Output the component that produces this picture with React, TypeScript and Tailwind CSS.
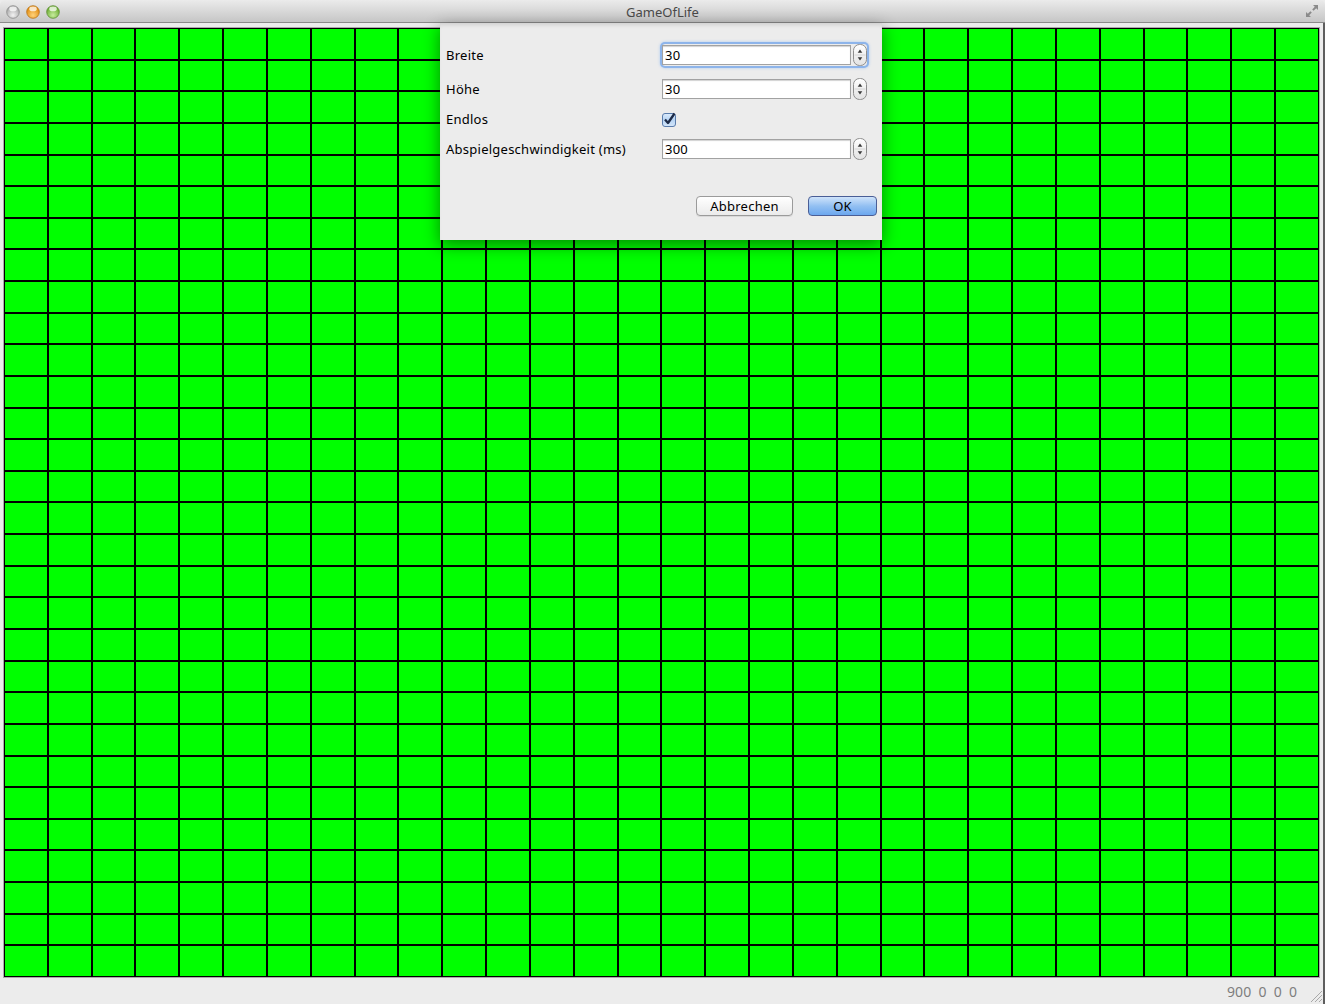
import React from "react";

function Light({ c1, c2, border }: { c1: string; c2: string; border: string }) {
  const id = "g" + c1.replace("#", "");
  return (
    <svg width="14" height="14" viewBox="0 0 14 14">
      <defs>
        <radialGradient id={id} cx="0.5" cy="0.75" r="0.65">
          <stop offset="0" stopColor={c1} />
          <stop offset="1" stopColor={c2} />
        </radialGradient>
      </defs>
      <circle cx="7" cy="7" r="6.3" fill={`url(#${id})`} stroke={border} strokeWidth="0.8" />
      <ellipse cx="7" cy="3.9" rx="3.8" ry="2.3" fill="#ffffff" opacity="0.75" />
    </svg>
  );
}

function Spinner() {
  return (
    <svg width="14" height="22" viewBox="0 0 14 22">
      <defs>
        <linearGradient id="spg" x1="0" y1="0" x2="0" y2="1">
          <stop offset="0" stopColor="#ffffff" />
          <stop offset="1" stopColor="#e2e2e2" />
        </linearGradient>
      </defs>
      <rect x="0.5" y="0.5" width="13" height="21" rx="6" fill="url(#spg)" stroke="#8e8e8e" />
      <line x1="1.5" y1="11" x2="12.5" y2="11" stroke="#d4d4d4" />
      <path d="M7 5.5 L9.3 8.8 H4.7 Z" fill="#3a3a3a" />
      <path d="M7 16.5 L9.3 13.2 H4.7 Z" fill="#3a3a3a" />
    </svg>
  );
}

function Field({ value, focused }: { value: string; focused?: boolean }) {
  return (
    <div
      className={
        focused
          ? "flex items-center gap-[2px] rounded-[3px] shadow-[0_0_0_2px_#8db4ea,0_0_3px_2px_#a9c8f0]"
          : "flex items-center gap-[2px]"
      }
    >
      <div className="w-[189px] h-[20px] bg-white border border-[#a2a2a2] shadow-[inset_0_1px_1px_rgba(0,0,0,0.18)] flex items-center pl-[2px] text-[13px] tracking-[0.2px] text-black leading-none">
        {value}
      </div>
      <Spinner />
    </div>
  );
}

function CheckBox() {
  return (
    <svg width="15" height="15" viewBox="0 0 15 15">
      <defs>
        <linearGradient id="cbg" x1="0" y1="0" x2="0" y2="1">
          <stop offset="0" stopColor="#dcebfb" />
          <stop offset="0.5" stopColor="#b7d4f4" />
          <stop offset="1" stopColor="#d4e6fa" />
        </linearGradient>
      </defs>
      <rect x="0.5" y="1.5" width="13" height="13" rx="2.5" fill="url(#cbg)" stroke="#5a7cab" />
      <path d="M3 7.5 L6 11 L12.5 1.5" fill="none" stroke="#1d2b47" strokeWidth="2.3" strokeLinejoin="round" />
    </svg>
  );
}

export default function App() {
  const cells = Array.from({ length: 900 });
  return (
    <div className="relative w-[1325px] h-[1004px] overflow-hidden bg-[#ececec] font-['Noto_Sans',sans-serif]">
      {/* title bar */}
      <div className="h-[23px] grid grid-cols-[1fr_auto_1fr] items-center bg-linear-to-b from-[#ebebeb] to-[#c6c6c6] border-b border-[#8a8a8a] rounded-t-[5px]">
        <div className="flex items-center gap-[6px] pl-[6px] pt-px">
          <Light c1="#f2f2f2" c2="#a6a6a6" border="#8a8a8a" />
          <Light c1="#ffd27a" c2="#e08a0c" border="#b8731a" />
          <Light c1="#c7ec9e" c2="#6aab2e" border="#5d8d36" />
        </div>
        <div className="text-[13px] text-[#4a4a4a] leading-none pt-[2px]">GameOfLife</div>
        <div className="flex justify-end pr-[6px]">
          <svg width="14" height="14" viewBox="0 0 14 14">
            <path d="M8 1 H13 V6 L11.2 4.2 L8.6 6.8 L7.2 5.4 L9.8 2.8 Z" fill="#8a8a8a" />
            <path d="M6 13 H1 V8 L2.8 9.8 L5.4 7.2 L6.8 8.6 L4.2 11.2 Z" fill="#8a8a8a" />
          </svg>
        </div>
      </div>

      {/* content */}
      <div className="flex h-[981px]">
        <div className="flex-1 flex flex-col">
          <div className="mt-[4px] ml-[3px] w-[1317px] h-[951px] border border-[#a9a9a9] bg-black p-px">
            <div className="grid grid-cols-30 grid-rows-30 gap-[2px] w-full h-full">
              {cells.map((_, i) => (
                <div key={i} className="bg-[#00ff00]" />
              ))}
            </div>
          </div>
          <div className="h-[26px] flex items-center justify-end pr-[26px] text-[14px] text-[#7e7e7e] whitespace-pre">
            900  0  0  0
          </div>
        </div>
        <div className="w-[2px] bg-[#5e5e5e]" />
      </div>

      {/* resize grip */}
      <svg className="absolute right-[2px] bottom-[1px]" width="14" height="14" viewBox="0 0 14 14">
        <path d="M13 2 L2 13 M13 6 L6 13 M13 10 L10 13" stroke="#a8a8a8" strokeWidth="1" />
      </svg>

      {/* sheet dialog */}
      <div className="absolute left-[440px] top-[23px] w-[442px] h-[217px] bg-[#ececec] shadow-[0_5px_16px_rgba(0,0,0,0.45),inset_0_4px_4px_-2px_rgba(0,0,0,0.12)] pt-[22px] pl-[6px] text-[13px] tracking-[0.25px] text-black">
        <div className="flex items-center h-[20px]">
          <div className="w-[216px] pt-[2px]">Breite</div>
          <Field value="30" focused />
        </div>
        <div className="flex items-center h-[20px] mt-[14px]">
          <div className="w-[216px] pt-[2px]">Höhe</div>
          <Field value="30" />
        </div>
        <div className="flex items-center h-[20px] mt-[10px]">
          <div className="w-[216px] pt-[2px]">Endlos</div>
          <CheckBox />
        </div>
        <div className="flex items-center h-[20px] mt-[10px]">
          <div className="w-[216px] pt-[2px]">Abspielgeschwindigkeit (ms)</div>
          <Field value="300" />
        </div>
        <div className="flex justify-end gap-[15px] pr-[5px] mt-[37px]">
          <div className="w-[97px] h-[20px] rounded-[4px] border border-[#9b9b9b] bg-linear-to-b from-white to-[#ebebeb] shadow-[0_1px_0_rgba(0,0,0,0.08)] flex items-center justify-center text-[13px] leading-none">
            Abbrechen
          </div>
          <div className="w-[69px] h-[20px] rounded-[4px] border border-[#4a5e96] bg-linear-to-b from-[#cfe3fa] via-[#93c0f2] to-[#6ba7ee] flex items-center justify-center text-[13px] leading-none">
            OK
          </div>
        </div>
      </div>
    </div>
  );
}
